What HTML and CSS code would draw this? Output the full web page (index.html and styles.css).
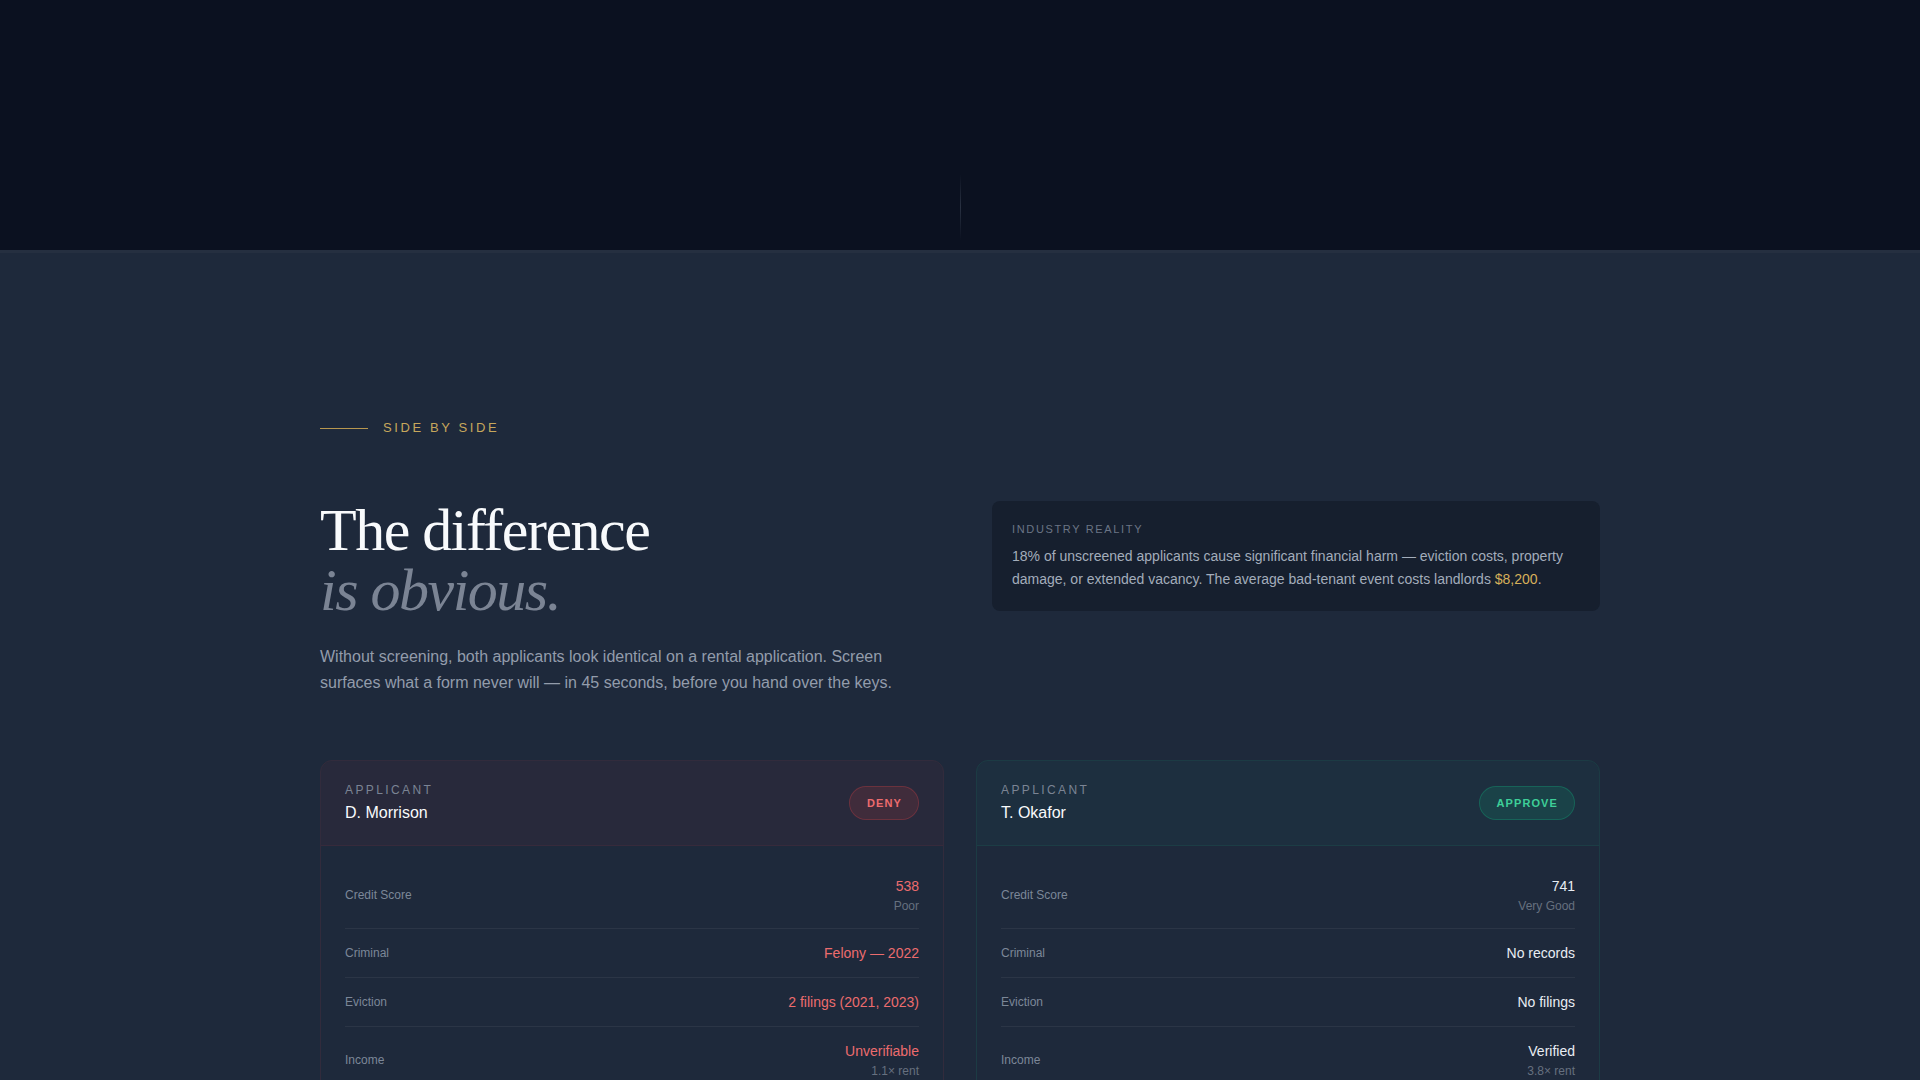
FILE: index.html
```html
<!DOCTYPE html>
<html lang="en">
<head>
<meta charset="utf-8">
<title>Side by side</title>
<link rel="stylesheet" href="styles.css">
</head>
<body>
<header class="hero">
  <div class="scroll-line"></div>
</header>

<section class="compare">
  <div class="container">
    <div class="eyebrow">
      <span class="eyebrow-line"></span>
      <span class="eyebrow-text">SIDE BY SIDE</span>
    </div>

    <div class="intro">
      <div class="intro-left">
        <h2 class="title">The difference<br><em>is obvious.</em></h2>
        <p class="lead">Without screening, both applicants look identical on a rental application. Screen surfaces what a form never will — in 45 seconds, before you hand over the keys.</p>
      </div>
      <aside class="reality">
        <div class="reality-label">INDUSTRY REALITY</div>
        <p class="reality-text">18% of unscreened applicants cause significant financial harm — eviction costs, property damage, or extended vacancy. The average bad-tenant event costs landlords <span class="gold">$8,200</span>.</p>
      </aside>
    </div>

    <div class="cards">
      <article class="card card-deny">
        <div class="card-head">
          <div class="who">
            <div class="who-label">APPLICANT</div>
            <div class="who-name">D. Morrison</div>
          </div>
          <span class="badge badge-deny">DENY</span>
        </div>
        <div class="card-body">
          <div class="row">
            <span class="row-label">Credit Score</span>
            <div class="row-value bad">538<span class="row-sub">Poor</span></div>
          </div>
          <div class="row">
            <span class="row-label">Criminal</span>
            <div class="row-value bad">Felony — 2022</div>
          </div>
          <div class="row">
            <span class="row-label">Eviction</span>
            <div class="row-value bad">2 filings (2021, 2023)</div>
          </div>
          <div class="row">
            <span class="row-label">Income</span>
            <div class="row-value bad">Unverifiable<span class="row-sub">1.1× rent</span></div>
          </div>
          <div class="row">
            <span class="row-label">References</span>
            <div class="row-value bad">Unreachable</div>
          </div>
        </div>
      </article>

      <article class="card card-approve">
        <div class="card-head">
          <div class="who">
            <div class="who-label">APPLICANT</div>
            <div class="who-name">T. Okafor</div>
          </div>
          <span class="badge badge-approve">APPROVE</span>
        </div>
        <div class="card-body">
          <div class="row">
            <span class="row-label">Credit Score</span>
            <div class="row-value good">741<span class="row-sub">Very Good</span></div>
          </div>
          <div class="row">
            <span class="row-label">Criminal</span>
            <div class="row-value good">No records</div>
          </div>
          <div class="row">
            <span class="row-label">Eviction</span>
            <div class="row-value good">No filings</div>
          </div>
          <div class="row">
            <span class="row-label">Income</span>
            <div class="row-value good">Verified<span class="row-sub">3.8× rent</span></div>
          </div>
          <div class="row">
            <span class="row-label">References</span>
            <div class="row-value good">2 positive</div>
          </div>
        </div>
      </article>
    </div>
  </div>
</section>
</body>
</html>
```

FILE: styles.css
```css
* { box-sizing: border-box; }

html, body {
  margin: 0;
  padding: 0;
}

body {
  background: #1e293b;
  font-family: "Liberation Sans", Arial, sans-serif;
  color: #e2e8f0;
}

.hero {
  height: 250px;
  background: #0b1120;
  display: flex;
  justify-content: center;
  align-items: flex-end;
  padding-bottom: 10px;
}

.scroll-line {
  width: 1px;
  height: 66px;
  background: linear-gradient(to bottom, rgba(148, 163, 184, 0), rgba(148, 163, 184, 0.22), rgba(148, 163, 184, 0));
}

.compare {
  border-top: 3px solid #252f40;
  padding-top: 167px;
  padding-bottom: 120px;
}

.container {
  width: 1280px;
  margin: 0 auto;
}

.eyebrow {
  display: flex;
  align-items: center;
  gap: 15px;
  height: 16px;
  margin-bottom: 65px;
}

.eyebrow-line {
  width: 48px;
  height: 1px;
  background: #b8974f;
}

.eyebrow-text {
  font-size: 13px;
  line-height: 16px;
  letter-spacing: 0.2em;
  color: #c6a75c;
}

.intro {
  display: grid;
  grid-template-columns: 1fr 1fr;
  gap: 64px;
  align-items: start;
}

.title {
  margin: -1px 0 0;
  font-family: "Liberation Serif", "Times New Roman", serif;
  font-weight: 400;
  font-size: 60px;
  line-height: 60px;
  letter-spacing: -0.025em;
  color: #f8fafc;
}

.title em {
  font-style: italic;
  color: #7b8494;
}

.lead {
  margin: 24px 0 0;
  max-width: 600px;
  font-size: 16px;
  line-height: 26px;
  color: #939cab;
}

.reality {
  background: #161f2e;
  border-radius: 8px;
  padding: 21px 20px 20px;
}

.reality-label {
  font-size: 11px;
  line-height: 14px;
  letter-spacing: 0.15em;
  color: #6b7585;
}

.reality-text {
  margin: 9px 0 0;
  font-size: 14px;
  line-height: 23px;
  color: #a3adbb;
}

.gold { color: #d6b05a; }

.cards {
  display: grid;
  grid-template-columns: 1fr 1fr;
  gap: 32px;
  margin-top: 64px;
}

.card {
  border-radius: 12px;
  border: 1px solid;
  overflow: hidden;
}

.card-deny {
  border-color: rgba(239, 68, 68, 0.1);
}

.card-approve {
  border-color: rgba(16, 185, 129, 0.13);
}

.card-head {
  display: flex;
  justify-content: space-between;
  align-items: center;
  padding: 21px 24px 21px;
  border-bottom: 1px solid;
}

.card-deny .card-head {
  background: rgba(239, 68, 68, 0.05);
  border-bottom-color: rgba(239, 68, 68, 0.08);
}

.card-approve .card-head {
  background: rgba(16, 185, 129, 0.05);
  border-bottom-color: rgba(16, 185, 129, 0.1);
}

.who-label {
  font-size: 12px;
  line-height: 16px;
  letter-spacing: 0.2em;
  color: #7b8494;
}

.who-name {
  margin-top: 4px;
  font-size: 16px;
  line-height: 22px;
  color: #f8fafc;
}

.badge {
  font-size: 11px;
  line-height: 14px;
  font-weight: 700;
  letter-spacing: 0.1em;
  padding: 9px 16px 9px 17px;
  border-radius: 999px;
  border: 1px solid;
}

.badge-deny {
  color: #ec6b6e;
  background: rgba(239, 68, 68, 0.12);
  border-color: rgba(239, 68, 68, 0.25);
}

.badge-approve {
  color: #3ecf98;
  background: rgba(16, 185, 129, 0.14);
  border-color: rgba(16, 185, 129, 0.28);
}

.card-body {
  padding: 16px 24px;
}

.row {
  display: flex;
  justify-content: space-between;
  align-items: center;
  padding: 14px 0;
  border-bottom: 1px solid rgba(255, 255, 255, 0.06);
}

.row:last-child { border-bottom: none; }

.row-label {
  font-size: 12px;
  line-height: 20px;
  color: #7c8798;
}

.row-value {
  display: flex;
  flex-direction: column;
  align-items: flex-end;
  font-size: 14px;
  line-height: 20px;
  text-align: right;
}

.row-value.bad { color: #ec6c6e; }
.row-value.good { color: #e8edf3; }

.row-sub {
  margin-top: 2px;
  font-size: 12px;
  line-height: 16px;
  color: #66707f;
}
```
